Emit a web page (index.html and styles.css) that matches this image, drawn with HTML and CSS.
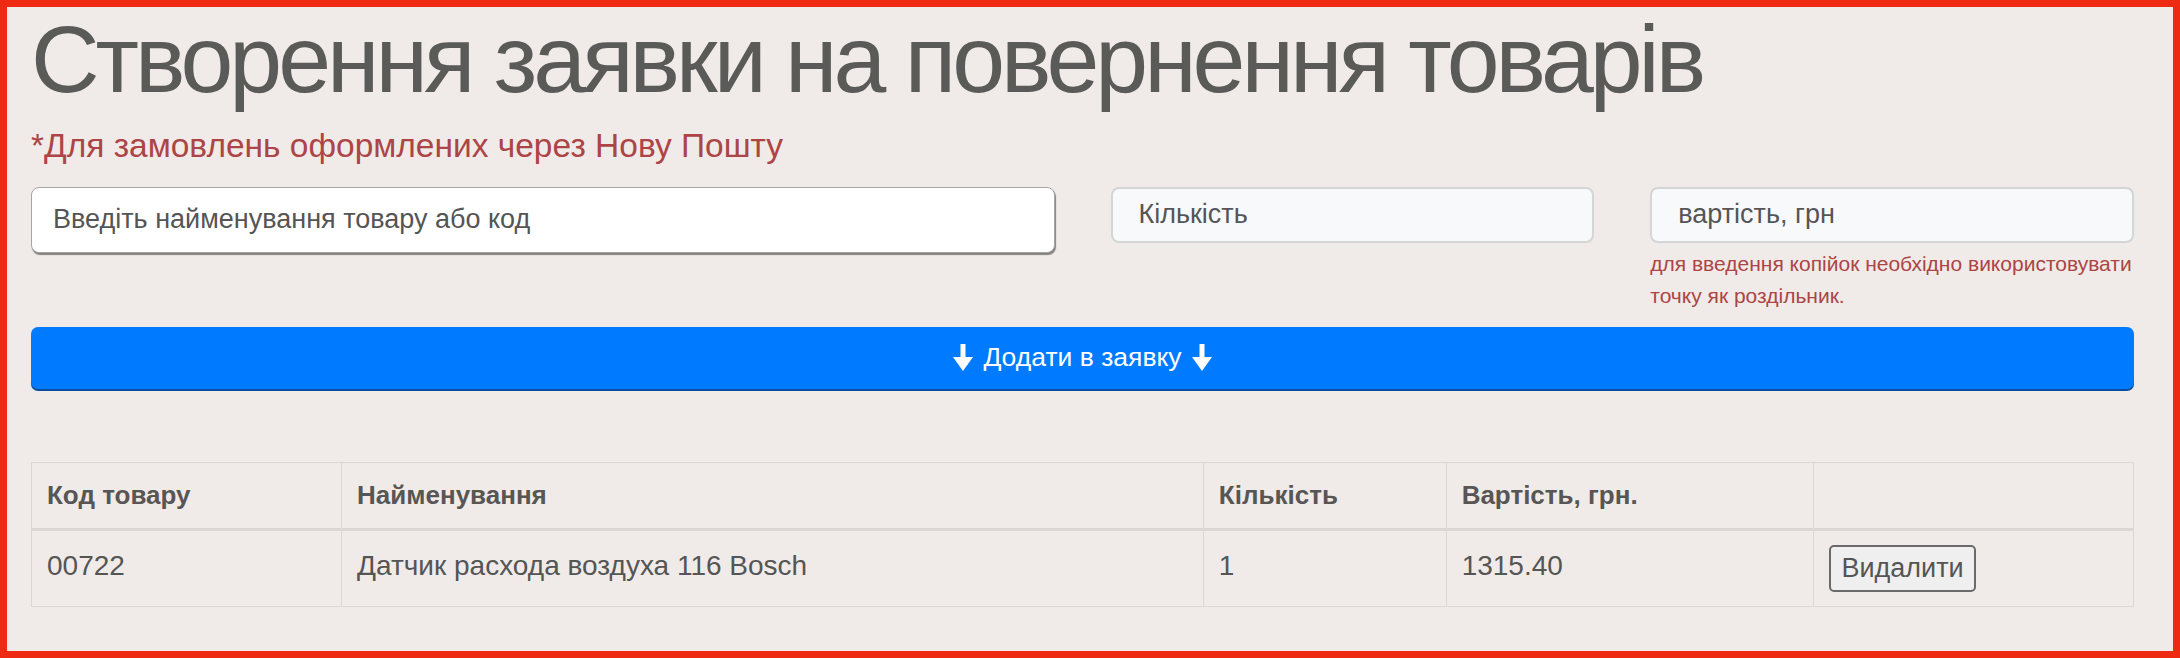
FILE: index.html
```html
<!DOCTYPE html>
<html lang="uk">
<head>
  <meta charset="UTF-8" />
  <title>Створення заявки на повернення товарів</title>
  <link rel="stylesheet" href="styles.css">
</head>
<body>
  <div class="page">
    <h1>Створення заявки на повернення товарів</h1>
    <p class="note">*Для замовлень оформлених через Нову Пошту</p>

    <form class="return-form">
      <div class="row">
        <div class="col col-6">
          <input type="text" class="field field-main" placeholder="Введіть найменування товару або код">
        </div>
        <div class="col col-3">
          <input type="text" class="field" placeholder="Кількість">
        </div>
        <div class="col col-3">
          <input type="text" class="field" placeholder="вартість, грн">
          <p class="hint">для введення копійок необхідно використовувати точку як роздільник.</p>
        </div>
      </div>

      <button type="button" class="btn-add">
        <svg class="arrow" viewBox="0 0 20 27"><rect x="7.5" y="0" width="5" height="15"/><polygon points="0,13 20,13 10,27"/></svg>
        Додати в заявку
        <svg class="arrow" viewBox="0 0 20 27"><rect x="7.5" y="0" width="5" height="15"/><polygon points="0,13 20,13 10,27"/></svg>
      </button>
    </form>

    <table class="items">
      <colgroup>
        <col class="c-code">
        <col class="c-name">
        <col class="c-qty">
        <col class="c-price">
        <col class="c-action">
      </colgroup>
      <thead>
        <tr>
          <th>Код товару</th>
          <th>Найменування</th>
          <th>Кількість</th>
          <th>Вартість, грн.</th>
          <th></th>
        </tr>
      </thead>
      <tbody>
        <tr>
          <td>00722</td>
          <td>Датчик расхода воздуха 116 Bosch</td>
          <td>1</td>
          <td>1315.40</td>
          <td><button type="button" class="btn-remove">Видалити</button></td>
        </tr>
      </tbody>
    </table>
  </div>
</body>
</html>
```

FILE: styles.css
```css
* {
  box-sizing: border-box;
}

html, body {
  height: 100%;
}

body {
  margin: 0;
  font-family: "Liberation Sans", Arial, sans-serif;
  font-size: 26px;
  line-height: 1.5;
  color: #555;
  background-color: #f0ebe8;
  border: 7px solid #ef2a12;
}

.page {
  padding: 0 39px 0 24px;
}

h1 {
  margin: 0;
  font-size: 95px;
  font-weight: normal;
  line-height: 1.1;
  letter-spacing: -4px;
  color: #5a5a59;
}

.note {
  margin: 14px 0 0;
  font-size: 33.5px;
  line-height: 1.2;
  color: #ad4446;
}

.return-form {
  margin-top: 21px;
}

.row {
  display: flex;
  margin: 0 -28px;
}

.col {
  padding: 0 28px;
}

.col-6 {
  flex: 0 0 50%;
}

.col-3 {
  flex: 0 0 25%;
}

.field {
  display: block;
  width: 100%;
  height: 56px;
  padding: 0 26px;
  font-family: inherit;
  font-size: 27px;
  color: #555;
  background-color: #f8f9fb;
  border: 2px solid #d4d5d7;
  border-radius: 8px;
}

.field::placeholder {
  color: #555;
}

.field-main {
  height: 66px;
  padding: 0 21px;
  background-color: #fff;
  border: 1px solid #a5a5a5;
  box-shadow: 1px 2px 1px rgba(0, 0, 0, 0.45);
}

.hint {
  margin: 5px 0 0;
  font-size: 21px;
  line-height: 32px;
  color: #ad4446;
}

.btn-add {
  display: flex;
  align-items: center;
  justify-content: center;
  gap: 10px;
  width: 100%;
  height: 62px;
  margin-top: 15px;
  font-family: inherit;
  font-size: 26.5px;
  color: #fff;
  background-color: #007bff;
  border: none;
  border-radius: 7px;
  box-shadow: 0 2px 0 #0c4c9c;
  cursor: pointer;
}

.arrow {
  width: 20px;
  height: 27px;
  fill: #fff;
}

.items {
  width: 100%;
  margin-top: 73px;
  border-collapse: collapse;
  table-layout: fixed;
  border: 1px solid #dcd7d4;
}

.c-code { width: 14.75%; }
.c-name { width: 41%; }
.c-qty { width: 11.55%; }
.c-price { width: 17.5%; }
.c-action { width: 15.2%; }

.items th,
.items td {
  padding: 13px 15px;
  text-align: left;
  vertical-align: top;
  border: 1px solid #dcd7d4;
}

.items th {
  font-weight: bold;
  color: #575655;
  border-bottom-width: 3px;
}

.items td {
  padding: 14px 15px;
  font-size: 28px;
}

.btn-remove {
  padding: 2px 10px;
  font-family: inherit;
  font-size: 27px;
  line-height: 1.45;
  color: #555;
  background-color: #efefef;
  border: 2px solid #6a6a6a;
  border-radius: 5px;
  cursor: pointer;
}
```
